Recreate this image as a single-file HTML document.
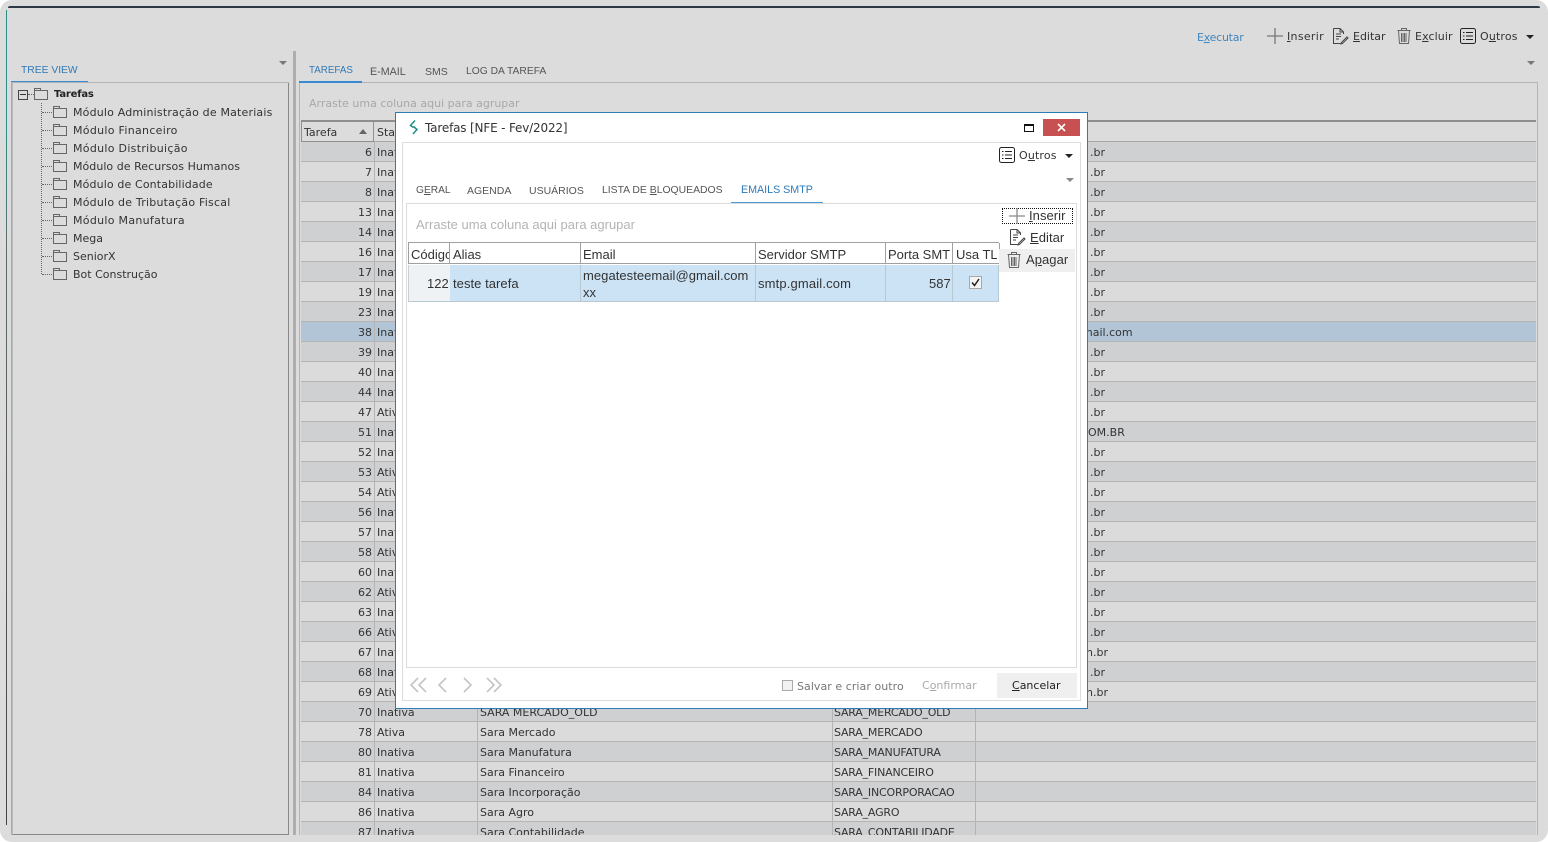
<!DOCTYPE html>
<html lang="pt"><head><meta charset="utf-8"><title>Tarefas</title>
<style>
html,body{margin:0;padding:0;background:#fff;width:1548px;height:842px;overflow:hidden}
#app{position:absolute;left:0;top:0;width:1548px;height:842px;background:#dcdcdc;border-radius:12px;overflow:hidden;font:11px "DejaVu Sans",sans-serif;color:#333}
.a,.t{position:absolute}
.t{white-space:nowrap;line-height:14px}
.tab{font:10.5px/14px "Liberation Sans",sans-serif;color:#555}
.blue{color:#2f7ab8}
.tree{left:73px;color:#333}
.fd{position:absolute;width:12px;height:8px;margin-top:-2px;border:1px solid #666;background:transparent}
.fd:before{content:"";position:absolute;left:-1px;top:-3px;width:5px;height:2px;border:1px solid #666;border-bottom:0}
.dh{position:absolute;height:0;border-top:1px dotted #666}
.arrow{position:absolute;width:0;height:0;border-left:4px solid transparent;border-right:4px solid transparent;border-top:4px solid #777}
#grid{position:absolute;left:301px;top:142px;width:1235px;height:693px;overflow:hidden}
.r{position:relative;height:19px;border-bottom:1px solid #b4b4b4;background:#dbdbdb}
.r.d{background:#cfd0d2}
.r.s{background:#b1c5d6}
.r span{position:absolute;top:4px;line-height:14px;white-space:nowrap;color:#333}
.r span:nth-child(1){right:1164px}
.r span:nth-child(2){left:76px}
.r span:nth-child(3){left:179px}
.r span:nth-child(4){left:533px;letter-spacing:-.2px}
.r span:nth-child(5){left:789px}
.r:before{content:"";position:absolute;left:73px;top:0;bottom:0;border-left:1px solid #b4b4b4}
.r:after{content:"";position:absolute;left:176px;top:0;bottom:0;border-left:1px solid #b4b4b4}
.v{position:absolute;top:0;bottom:0;border-left:1px solid #b4b4b4}
#modal{position:absolute;left:395px;top:112px;width:691px;height:595px;background:#fff;border:1px solid #2a7db5;z-index:5;overflow:hidden}
.m{font:13px/16px "Liberation Sans",sans-serif;color:#333;letter-spacing:.05px}
.mh{position:absolute;top:130px;height:20px;background:#fff;border:1px solid #a0a0a0;border-left:0;border-top:0;overflow:hidden;padding:0;font:13px/23px "Liberation Sans",sans-serif;color:#333;white-space:nowrap;box-sizing:content-box}
.mc{position:absolute;top:152px;height:36px;background:#cbe3f5;border-right:1px solid #b8c8d2;border-bottom:1px solid #b8c8d2}
svg{position:absolute;overflow:visible}
</style></head><body>
<div id="app">
<!-- window edges -->
<div class="a" style="left:8px;top:6px;width:1532px;height:2px;background:#2d3a45;border-radius:2px 2px 0 0"></div>
<div class="a" style="left:6px;top:10px;width:1px;height:815px;background:linear-gradient(#2c8c86,#2c8c86 15%,#606a6a 30%,#444)"></div>

<!-- toolbar -->
<div class="t blue" style="left:1197px;top:31px;color:#3f86c0;letter-spacing:-.25px">E<u>x</u>ecutar</div>
<svg style="left:1266px;top:28px" width="18" height="16"><path d="M1 8H17M9 0V16" stroke="#777" stroke-width="1.3" fill="none"/></svg>
<div class="t" style="left:1287px;top:30px;letter-spacing:.3px"><u>I</u>nserir</div>
<svg style="left:1332px;top:28px" width="17" height="17"><path d="M1.500 .5H8L11.500 4V6M8 .5V4H11.500M1.500 .5V15.500H8.500M4 6H9M4 8.500H9M4 11H7M9.500 14.500L15 9L16 10L10.500 15.500L9 16Z" stroke="#444" fill="none"/></svg>
<div class="t" style="left:1353px;top:30px"><u>E</u>ditar</div>
<svg style="left:1397px;top:28px" width="14" height="17"><path d="M.5 2.500H13.500M4.500 2.500V.5H9.500V2.500M1.500 2.500L2.500 15.500H11.500L12.500 2.500M4.500 5V14M6 5V14M7.500 5V14M9 5V14" stroke="#666" fill="none"/></svg>
<div class="t" style="left:1415px;top:30px;letter-spacing:.1px">E<u>x</u>cluir</div>
<svg style="left:1460px;top:28px" width="17" height="17"><rect x=".5" y=".5" width="15" height="15" rx="2" stroke="#222" fill="none"/><path d="M6 4.500H13M6 8H13M6 11.500H13M3 4.500H4.500M3 8H4.500M3 11.500H4.500" stroke="#222" fill="none"/></svg>
<div class="t" style="left:1480px;top:30px;letter-spacing:.15px">O<u>u</u>tros</div>
<div class="arrow" style="left:1526px;top:35px;border-top-color:#222"></div>
<div class="arrow" style="left:1527px;top:61px"></div>

<!-- left panel -->
<div class="arrow" style="left:279px;top:61px"></div>
<div class="t" style="left:21px;top:64px;font:10.3px/14px 'Liberation Sans',sans-serif;color:#2f7ab8">TREE VIEW</div>
<div class="a" style="left:11px;top:81px;width:77px;height:2px;background:#3a8ad2"></div>
<div class="a" style="left:11px;top:82px;width:278px;height:1px;background:#b4b4b4"></div>
<div class="a" style="left:11px;top:83px;width:1px;height:752px;background:#aaa"></div>
<div class="a" style="left:12px;top:83px;width:275px;height:751px;border-left:1px solid #bbb;border-right:1px solid #888;border-bottom:1px solid #888;box-sizing:content-box"></div>

<div class="a" style="left:18px;top:90px;width:8px;height:8px;border:1px solid #444"></div>
<div class="a" style="left:20px;top:94px;width:6px;height:1px;background:#333"></div>
<div class="dh" style="left:28px;top:94px;width:6px"></div>
<div class="fd" style="left:34px;top:92px"></div>
<div class="t" style="left:54px;top:88px;font-size:10px;font-weight:bold;letter-spacing:-.2px;color:#222">Tarefas</div>
<div class="a" style="left:41px;top:103px;height:171px;border-left:1px dotted #666"></div>
<div class="dh" style="left:42px;top:112px;width:12px"></div><div class="fd" style="left:53px;top:110px"></div><div class="t tree" style="top:106px;letter-spacing:.18px">Módulo Administração de Materiais</div>
<div class="dh" style="left:42px;top:130px;width:12px"></div><div class="fd" style="left:53px;top:128px"></div><div class="t tree" style="top:124px;letter-spacing:.3px">Módulo Financeiro</div>
<div class="dh" style="left:42px;top:148px;width:12px"></div><div class="fd" style="left:53px;top:146px"></div><div class="t tree" style="top:142px;letter-spacing:.3px">Módulo Distribuição</div>
<div class="dh" style="left:42px;top:166px;width:12px"></div><div class="fd" style="left:53px;top:164px"></div><div class="t tree" style="top:160px;letter-spacing:.04px">Módulo de Recursos Humanos</div>
<div class="dh" style="left:42px;top:184px;width:12px"></div><div class="fd" style="left:53px;top:182px"></div><div class="t tree" style="top:178px;letter-spacing:.13px">Módulo de Contabilidade</div>
<div class="dh" style="left:42px;top:202px;width:12px"></div><div class="fd" style="left:53px;top:200px"></div><div class="t tree" style="top:196px;letter-spacing:.22px">Módulo de Tributação Fiscal</div>
<div class="dh" style="left:42px;top:220px;width:12px"></div><div class="fd" style="left:53px;top:218px"></div><div class="t tree" style="top:214px;letter-spacing:.3px">Módulo Manufatura</div>
<div class="dh" style="left:42px;top:238px;width:12px"></div><div class="fd" style="left:53px;top:236px"></div><div class="t tree" style="top:232px">Mega</div>
<div class="dh" style="left:42px;top:256px;width:12px"></div><div class="fd" style="left:53px;top:254px"></div><div class="t tree" style="top:250px">SeniorX</div>
<div class="dh" style="left:42px;top:274px;width:12px"></div><div class="fd" style="left:53px;top:272px"></div><div class="t tree" style="top:268px">Bot Construção</div>

<!-- splitter -->
<div class="a" style="left:293px;top:51px;width:3px;height:784px;background:#aeaeae"></div>

<!-- right panel -->
<div class="t tab" style="left:309px;top:64px;font-size:9.8px;color:#2f7ab8">TAREFAS</div>
<div class="t tab" style="left:370px;top:65px;font-size:10.7px">E-MAIL</div>
<div class="t tab" style="left:425px;top:65px">SMS</div>
<div class="t tab" style="left:466px;top:65px;font-size:10.3px">LOG DA TAREFA</div>
<div class="a" style="left:299px;top:81px;width:63px;height:2px;background:#3a8ad2"></div>
<div class="a" style="left:362px;top:82px;width:1176px;height:1px;background:#b4b4b4"></div>
<div class="a" style="left:299px;top:83px;width:1px;height:752px;background:#b4b4b4"></div>
<div class="a" style="left:1537px;top:83px;width:1px;height:752px;background:#b4b4b4"></div>
<div class="t" style="left:309px;top:97px;color:#a8a8a8">Arraste uma coluna aqui para agrupar</div>
<div class="a" style="left:301px;top:120px;width:1235px;height:2px;background:#8f8f8f"></div>
<div class="a" style="left:301px;top:122px;width:73px;height:19px;border-left:1px solid #8f8f8f;border-right:1px solid #8f8f8f;border-bottom:1px solid #8f8f8f;box-sizing:border-box;height:20px"></div>
<div class="a" style="left:374px;top:141px;width:1162px;height:1px;background:#a8a8a8"></div>
<div class="t" style="left:304px;top:126px">Tarefa</div>
<div class="a" style="left:359px;top:129px;width:0;height:0;border-left:4px solid transparent;border-right:4px solid transparent;border-bottom:5px solid #666"></div>
<div class="t" style="left:377px;top:126px">Status</div>

<div id="grid">
<div class="r d"><span>6</span><span>Inativa</span><span></span><span></span><span>.br</span></div>
<div class="r"><span>7</span><span>Inativa</span><span></span><span></span><span>.br</span></div>
<div class="r d"><span>8</span><span>Inativa</span><span></span><span></span><span>.br</span></div>
<div class="r"><span>13</span><span>Inativa</span><span></span><span></span><span>.br</span></div>
<div class="r d"><span>14</span><span>Inativa</span><span></span><span></span><span>.br</span></div>
<div class="r"><span>16</span><span>Inativa</span><span></span><span></span><span>.br</span></div>
<div class="r d"><span>17</span><span>Inativa</span><span></span><span></span><span>.br</span></div>
<div class="r"><span>19</span><span>Inativa</span><span></span><span></span><span>.br</span></div>
<div class="r d"><span>23</span><span>Inativa</span><span></span><span></span><span>.br</span></div>
<div class="r s"><span>38</span><span>Inativa</span><span></span><span></span><span style="left:781px">mail.com</span></div>
<div class="r d"><span>39</span><span>Inativa</span><span></span><span></span><span>.br</span></div>
<div class="r"><span>40</span><span>Inativa</span><span></span><span></span><span>.br</span></div>
<div class="r d"><span>44</span><span>Inativa</span><span></span><span></span><span>.br</span></div>
<div class="r"><span>47</span><span>Ativa</span><span></span><span></span><span>.br</span></div>
<div class="r d"><span>51</span><span>Inativa</span><span></span><span></span><span style="left:787px">OM.BR</span></div>
<div class="r"><span>52</span><span>Inativa</span><span></span><span></span><span>.br</span></div>
<div class="r d"><span>53</span><span>Ativa</span><span></span><span></span><span>.br</span></div>
<div class="r"><span>54</span><span>Ativa</span><span></span><span></span><span>.br</span></div>
<div class="r d"><span>56</span><span>Inativa</span><span></span><span></span><span>.br</span></div>
<div class="r"><span>57</span><span>Inativa</span><span></span><span></span><span>.br</span></div>
<div class="r d"><span>58</span><span>Ativa</span><span></span><span></span><span>.br</span></div>
<div class="r"><span>60</span><span>Inativa</span><span></span><span></span><span>.br</span></div>
<div class="r d"><span>62</span><span>Ativa</span><span></span><span></span><span>.br</span></div>
<div class="r"><span>63</span><span>Inativa</span><span></span><span></span><span>.br</span></div>
<div class="r d"><span>66</span><span>Ativa</span><span></span><span></span><span>.br</span></div>
<div class="r"><span>67</span><span>Inativa</span><span></span><span></span><span style="left:785px">n.br</span></div>
<div class="r d"><span>68</span><span>Inativa</span><span></span><span></span><span>.br</span></div>
<div class="r"><span>69</span><span>Ativa</span><span></span><span></span><span style="left:785px">n.br</span></div>
<div class="r d"><span>70</span><span>Inativa</span><span>SARA MERCADO_OLD</span><span>SARA_MERCADO_OLD</span></div>
<div class="r"><span>78</span><span>Ativa</span><span>Sara Mercado</span><span>SARA_MERCADO</span></div>
<div class="r d"><span>80</span><span>Inativa</span><span>Sara Manufatura</span><span>SARA_MANUFATURA</span></div>
<div class="r"><span>81</span><span>Inativa</span><span>Sara Financeiro</span><span>SARA_FINANCEIRO</span></div>
<div class="r d"><span>84</span><span>Inativa</span><span>Sara Incorporação</span><span>SARA_INCORPORACAO</span></div>
<div class="r"><span>86</span><span>Inativa</span><span>Sara Agro</span><span>SARA_AGRO</span></div>
<div class="r d"><span>87</span><span>Inativa</span><span>Sara Contabilidade</span><span>SARA_CONTABILIDADE</span></div>
<div class="v" style="left:531px"></div>
<div class="v" style="left:674px"></div>
</div>

<!-- modal -->
<div id="modal">
  <svg style="left:12px;top:7px" width="12" height="15"><path d="M7 .5L2.500 5.500L5.500 7.500M5.500 6.500L9 9.500L5 14" stroke="#1f8f85" stroke-width="1.500" fill="none"/></svg>
  <div class="t" style="left:29px;top:8px;font-size:12px;letter-spacing:-.17px;color:#333">Tarefas [NFE - Fev/2022]</div>
  <div class="a" style="left:628px;top:11px;width:8px;height:5px;border:1px solid #111;border-top-width:2px"></div>
  <div class="a" style="left:647px;top:6px;width:37px;height:17px;background:#c75050"></div>
  <svg style="left:661px;top:10px" width="9" height="9"><path d="M1 1L8 8M8 1L1 8" stroke="#fff" stroke-width="1.600"/></svg>

  <div class="a" style="left:6px;top:29px;width:677px;height:557px;border:1px solid #dcdcdc"></div>
  <svg style="left:603px;top:34px" width="17" height="17"><rect x=".5" y=".5" width="15" height="15" rx="2" stroke="#222" fill="none"/><path d="M6 4.500H13M6 8H13M6 11.500H13M3 4.500H4.500M3 8H4.500M3 11.500H4.500" stroke="#222" fill="none"/></svg>
  <div class="t" style="left:623px;top:36px;letter-spacing:.15px">O<u>u</u>tros</div>
  <div class="arrow" style="left:669px;top:41px;border-top-color:#222"></div>
  <div class="arrow" style="left:670px;top:65px;border-top-color:#888"></div>

  <div class="t tab" style="left:20px;top:71px;font-size:10.2px">G<u>E</u>RAL</div>
  <div class="t tab" style="left:71px;top:71px">AGENDA</div>
  <div class="t tab" style="left:133px;top:71px">USUÁRIOS</div>
  <div class="t tab" style="left:206px;top:71px;font-size:10.4px">LISTA DE <u>B</u>LOQUEADOS</div>
  <div class="t tab" style="left:345px;top:70px;font-size:10.7px;color:#2f7ab8">EMAILS SMTP</div>
  <div class="a" style="left:335px;top:89px;width:92px;height:2px;background:#4a9ad8"></div>
  <div class="a" style="left:10px;top:90px;width:669px;height:463px;border:1px solid #dcdcdc"></div>

  <div class="t m" style="left:20px;top:104px;color:#b4b4b4;letter-spacing:0">Arraste uma coluna aqui para agrupar</div>

  <!-- mini grid -->
  <div class="a" style="left:12px;top:129px;width:591px;height:2px;background:#a0a0a0"></div>
  <div class="mh" style="left:12px;width:38px;border-left:1px solid #a0a0a0;padding-left:2px">Código</div>
  <div class="mh" style="left:54px;width:127px;padding-left:3px">Alias</div>
  <div class="mh" style="left:185px;width:172px;padding-left:2px">Email</div>
  <div class="mh" style="left:360px;width:127px;padding-left:2px">Servidor SMTP</div>
  <div class="mh" style="left:490px;width:64px;padding-left:2px"><div style="width:63px;overflow:hidden">Porta SMTP</div></div>
  <div class="mh" style="left:557px;width:43px;padding-left:3px"><div style="width:41px;overflow:hidden">Usa TLS</div></div>

  <div class="a" style="left:12px;top:152px;width:41px;height:36px;background:#eff2f5;border-bottom:1px solid #b8c8d2;border-left:1px solid #c8d0d6"></div>
  <div class="mc" style="left:54px;width:130px"></div>
  <div class="mc" style="left:185px;width:174px"></div>
  <div class="mc" style="left:360px;width:129px"></div>
  <div class="mc" style="left:490px;width:66px"></div>
  <div class="mc" style="left:557px;width:45px"></div>
  <div class="t m" style="left:31px;top:163px">122</div>
  <div class="t m" style="left:57px;top:163px">teste tarefa</div>
  <div class="t m" style="left:187px;top:155px">megatesteemail@gmail.com</div>
  <div class="t m" style="left:187px;top:172px">xx</div>
  <div class="t m" style="left:362px;top:163px;letter-spacing:.15px">smtp.gmail.com</div>
  <div class="t m" style="left:533px;top:163px">587</div>
  <div class="a" style="left:573px;top:163px;width:11px;height:11px;border:1px solid #a8a8a8;background:#f4f4f4"></div>
  <svg style="left:574px;top:164px" width="11" height="11"><path d="M2 5.500L4.500 8.500L9 2" stroke="#222" stroke-width="1.500" fill="none"/></svg>

  <!-- side buttons -->
  <div class="a" style="left:606px;top:95px;width:69px;height:14px;border:1px dotted #111"></div>
  <svg style="left:613px;top:95px" width="18" height="16"><path d="M0 8H16M8 0V16" stroke="#888" stroke-width="1.300" fill="none"/></svg>
  <div class="t m" style="left:633px;top:95px"><u>I</u>nserir</div>
  <svg style="left:613px;top:116px" width="17" height="17"><path d="M1.500 .5H8L11.500 4V6M8 .5V4H11.500M1.500 .5V15.500H8.500M4 6H9M4 8.500H9M4 11H7M9.500 14.500L15 9L16 10L10.500 15.500L9 16Z" stroke="#444" fill="none"/></svg>
  <div class="t m" style="left:634px;top:117px"><u>E</u>ditar</div>
  <div class="a" style="left:603px;top:136px;width:76px;height:23px;background:#efefef"></div>
  <svg style="left:611px;top:139px" width="14" height="17"><path d="M.5 2.500H13.500M4.500 2.500V.5H9.500V2.500M1.500 2.500L2.500 15.500H11.500L12.500 2.500M4.500 5V14M6 5V14M7.500 5V14M9 5V14" stroke="#666" fill="none"/></svg>
  <div class="t m" style="left:630px;top:139px">A<u>p</u>agar</div>

  <!-- footer -->
  <svg style="left:14px;top:564px" width="95" height="17" fill="none" stroke="#c4c4c4" stroke-width="1.600"><path d="M8 1L1 8L8 15M16 1L9 8L16 15M36 1L29 8L36 15M54 1L61 8L54 15M77 1L84 8L77 15M84 1L91 8L84 15"/></svg>
  <div class="a" style="left:386px;top:567px;width:9px;height:9px;border:1px solid #aaa;background:#f2f2f2"></div>
  <div class="t" style="left:401px;top:567px;color:#777;letter-spacing:.05px">Salvar e criar outro</div>
  <div class="t" style="left:526px;top:566px;color:#aaa">C<u>o</u>nfirmar</div>
  <div class="a" style="left:601px;top:560px;width:80px;height:25px;background:#efefef"></div>
  <div class="t" style="left:616px;top:566px;color:#222"><u>C</u>ancelar</div>
</div>
</div>
</body></html>
